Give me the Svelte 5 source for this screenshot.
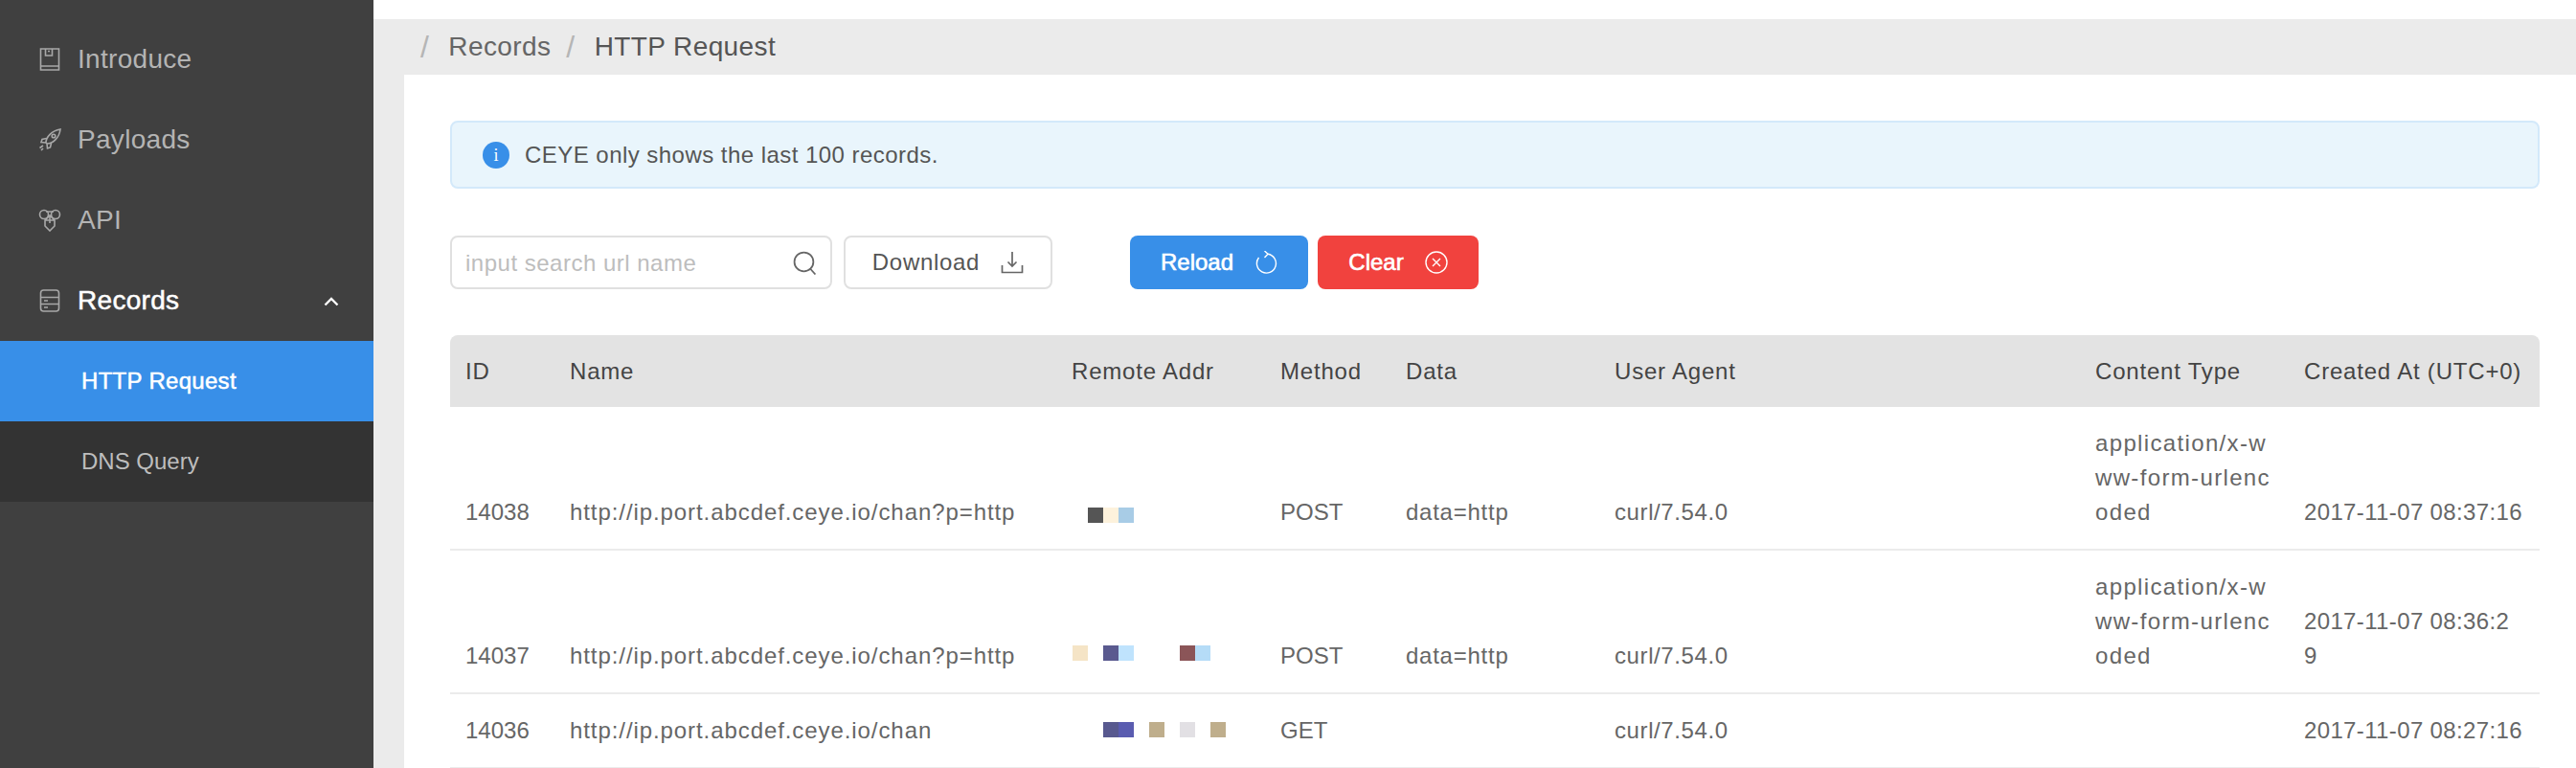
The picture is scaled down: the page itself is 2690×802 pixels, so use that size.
<script>
  const nav = [
    { label: 'Introduce', icon: 'book' },
    { label: 'Payloads', icon: 'rocket' },
    { label: 'API', icon: 'api' },
    { label: 'Records', icon: 'db', open: true }
  ];
  const cols = [109, 524, 218, 131, 218, 502, 218, 262];
  const heads = ['ID', 'Name', 'Remote Addr', 'Method', 'Data', 'User Agent', 'Content Type', 'Created At (UTC+0)'];
  const ct = 'application/x-www-form-urlencoded';
  const rows = [
    { id: '14038', name: 'http://ip.port.abcdef.ceye.io/chan?p=http', lift: 7, cells: [null, '#555555', '#fdf2dc', '#a8cce6'], method: 'POST', data: 'data=http', agent: 'curl/7.54.0', type: ct, at: '2017-11-07 08:37:16' },
    { id: '14037', name: 'http://ip.port.abcdef.ceye.io/chan?p=http', lift: 13, cells: ['#f5e4c6', null, '#5a5a8f', '#bfe3fd', null, null, null, '#8b5558', '#b5dcf7'], method: 'POST', data: 'data=http', agent: 'curl/7.54.0', type: ct, at: '2017-11-07 08:36:2\n9' },
    { id: '14036', name: 'http://ip.port.abcdef.ceye.io/chan', lift: 11, cells: [null, null, '#58598f', '#5a5cb0', null, '#bfae8c', null, '#e2e0e4', null, '#bfae8c'], method: 'GET', data: '', agent: 'curl/7.54.0', type: '', at: '2017-11-07 08:27:16' }
  ];
</script>

<div class="app">
  <aside class="side">
    {#each nav as item}
      <div class="item" class:open={item.open}>
        <svg class="ico" viewBox="0 0 24 24" fill="none" stroke="currentColor" stroke-width="1.6">
          {#if item.icon === 'book'}
            <path d="M2.5 1h19v22h-19zM2.5 19h19M7.5 1v7h7V1M10 3.5h2" />
          {:else if item.icon === 'rocket'}
            <path d="M8 15C8 9 14 2.500 23 1c-1 9-8 15-14 15zM8.500 10.500 4 11.500l-1 3 5 .5M13.500 15.500l-1 4.500-3 1-.5-5" /><circle cx="16" cy="8" r="1.800" /><path d="M1.500 20.500 5 18M3 23l2-2" />
          {:else if item.icon === 'api'}
            <circle cx="6" cy="6" r="4.500" /><circle cx="18" cy="6" r="4.500" /><path d="M7 12h10v6l-5 5-5-5zM8 3h8M7 12l5-5 5 5M12 7v8" />
          {:else}
            <rect x="2.500" y="1" width="19" height="22" rx="3" /><path d="M2.500 8.500h19M2.500 15.500h19M6 12h4M6 19h4" />
          {/if}
        </svg>
        <span class="lbl">{item.label}</span>
        {#if item.open}
          <svg class="chev" viewBox="0 0 16 10" fill="none" stroke="currentColor" stroke-width="2.400"><path d="M1.500 8.500 8 2l6.500 6.500" /></svg>
        {/if}
      </div>
    {/each}
    <div class="sub active">HTTP Request</div>
    <div class="sub">DNS Query</div>
  </aside>

  <main class="main">
    <nav class="crumb">
      <span class="sep">/</span><span class="rec">Records</span><span class="sep">/</span><span class="cur">HTTP Request</span>
    </nav>
    <section class="card">
      <div class="alert">
        <span class="info">i</span>
        <span class="msg">CEYE only shows the last 100 records.</span>
      </div>

      <div class="tools">
        <div class="search">
          <span class="ph">input search url name</span>
          <svg class="sic" viewBox="0 0 24 24" fill="none" stroke="#666" stroke-width="1.700"><circle cx="11" cy="11" r="9.500" /><path d="M17.500 18l5 5.500" /></svg>
        </div>
        <button class="btn plain"><span class="dl">Download</span>
          <svg class="bic" viewBox="0 0 24 24" fill="none" stroke="#666" stroke-width="1.700"><path d="M12 1v15M7.500 11.500 12 16l4.500-4.500M1.500 15v7.500h21V15" /></svg>
        </button>
        <button class="btn blue">Reload
          <svg class="bic" viewBox="0 0 24 24" fill="none" stroke="#fff" stroke-width="1.400"><path d="M14 3.200A10 10 0 1 1 4.500 7" /><path d="M10.500 0 14 3.200 10.500 7" /></svg>
        </button>
        <button class="btn red">Clear
          <svg class="bic" viewBox="0 0 24 24" fill="none" stroke="#fff" stroke-width="1.400"><circle cx="12" cy="12" r="11" /><path d="M8 8l8 8M16 8l-8 8" /></svg>
        </button>
      </div>

      <table>
        <colgroup>
          {#each cols as w}<col style="width:{w}px" />{/each}
        </colgroup>
        <thead>
          <tr>{#each heads as h}<th>{h}</th>{/each}</tr>
        </thead>
        <tbody>
          {#each rows as r}
            <tr>
              <td>{r.id}</td>
              <td class="url">{r.name}</td>
              <td>
                <div class="mask" style="margin-bottom:{r.lift}px">
                  {#each r.cells as c}<i style="background:{c ?? 'transparent'}"></i>{/each}
                </div>
              </td>
              <td>{r.method}</td>
              <td class="val">{r.data}</td>
              <td class="ua">{r.agent}</td>
              <td class="ctype">{r.type}</td>
              <td class="at">{r.at}</td>
            </tr>
          {/each}
        </tbody>
      </table>
    </section>
  </main>
</div>

<style>
  :global(body) {
    margin: 0;
    background: #fff;
  }
  .app {
    display: flex;
    width: 2690px;
    height: 802px;
    overflow: hidden;
    font-family: "Liberation Sans", Arial, sans-serif;
    font-size: 24px;
    line-height: 36px;
    color: #666;
  }
  .side {
    flex: 0 0 390px;
    padding-top: 20px;
    box-sizing: border-box;
    background: #404040;
  }
  .item {
    position: relative;
    display: flex;
    align-items: center;
    height: 84px;
    padding-left: 40px;
    color: #b4b4b4;
    font-size: 28px;
  }
  .item.open {
    color: #fff;
    -webkit-text-stroke: 0.5px #fff;
  }
  .ico {
    width: 24px;
    height: 24px;
    margin-right: 17px;
    color: #a8a8a8;
  }
  .lbl {
    letter-spacing: 0.3px;
  }
  .chev {
    position: absolute;
    left: 338px;
    top: 38px;
    width: 16px;
    height: 10px;
  }
  .sub {
    height: 84px;
    line-height: 84px;
    padding-left: 85px;
    background: #333;
    color: #bdbdbd;
  }
  .sub.active {
    background: #388fe8;
    color: #fff;
    letter-spacing: 0.3px;
    -webkit-text-stroke: 0.5px #fff;
  }
  .main {
    flex: 1;
    margin-top: 20px;
    background: #ebebeb;
    min-width: 0;
  }
  .crumb {
    display: flex;
    align-items: center;
    height: 58px;
    padding-left: 49px;
    font-size: 28px;
    letter-spacing: 0.4px;
    color: #666;
  }
  .sep {
    margin-right: 20px;
    color: #b5b5b5;
    font-size: 32px;
    font-weight: 400;
  }
  .rec {
    margin-right: 16px;
  }
  .cur {
    color: #555;
  }
  .card {
    height: 724px;
    box-sizing: border-box;
    margin-left: 32px;
    padding: 48px 38px 0 48px;
    background: #fff;
  }
  .alert {
    display: flex;
    align-items: center;
    height: 71px;
    box-sizing: border-box;
    padding-left: 32px;
    border: 2px solid #d3e9fa;
    border-radius: 8px;
    background: #e9f5fc;
    color: #555;
  }
  .msg {
    letter-spacing: 0.46px;
  }
  .info {
    width: 28px;
    height: 28px;
    margin-right: 16px;
    border-radius: 50%;
    background: #388fe8;
    color: #fff;
    font: 18px/28px "Liberation Serif", serif;
    text-align: center;
  }
  .tools {
    display: flex;
    height: 56px;
    margin-top: 49px;
  }
  .search {
    display: flex;
    align-items: center;
    justify-content: space-between;
    width: 399px;
    box-sizing: border-box;
    padding: 0 14px;
    border: 2px solid #e0e0e0;
    border-radius: 8px;
  }
  .ph {
    padding-top: 2px;
    color: #bdbdbd;
    letter-spacing: 0.5px;
  }
  .sic {
    width: 25px;
    height: 25px;
  }
  .btn {
    display: flex;
    align-items: center;
    justify-content: center;
    height: 56px;
    box-sizing: border-box;
    padding: 0;
    border: 0;
    border-radius: 8px;
    font: inherit;
  }
  .bic {
    width: 24px;
    height: 24px;
    margin-left: 22px;
  }
  .plain {
    width: 218px;
    margin-left: 12px;
    border: 2px solid #e0e0e0;
    background: #fff;
    color: #555;
  }
  .dl {
    letter-spacing: 0.7px;
  }
  .blue {
    width: 186px;
    margin-left: 81px;
    background: #388fe8;
    color: #fff;
    -webkit-text-stroke: 0.6px #fff;
  }
  .red {
    width: 168px;
    margin-left: 10px;
    background: #f1423e;
    color: #fff;
    -webkit-text-stroke: 0.6px #fff;
  }
  table {
    width: 2182px;
    margin-top: 48px;
    table-layout: fixed;
    border-collapse: separate;
    border-spacing: 0;
  }
  th {
    height: 75px;
    box-sizing: border-box;
    padding: 0 16px;
    background: #e3e3e3;
    color: #444;
    font-weight: 400;
    letter-spacing: 0.8px;
    text-align: left;
    white-space: nowrap;
  }
  th:first-child {
    border-top-left-radius: 8px;
  }
  th:last-child {
    border-top-right-radius: 8px;
  }
  td {
    padding: 20px 16px;
    border-bottom: 2px solid #ebebeb;
    vertical-align: bottom;
  }
  .url {
    letter-spacing: 0.92px;
    white-space: nowrap;
  }
  .val {
    letter-spacing: 0.75px;
  }
  .ua {
    letter-spacing: 0.6px;
  }
  .ctype {
    letter-spacing: 1.35px;
    word-break: break-all;
  }
  .at {
    letter-spacing: 0.36px;
    white-space: pre;
  }
  .mask {
    display: flex;
    margin-left: 1px;
  }
  .mask i {
    flex: 0 0 16px;
    height: 16px;
  }
</style>
